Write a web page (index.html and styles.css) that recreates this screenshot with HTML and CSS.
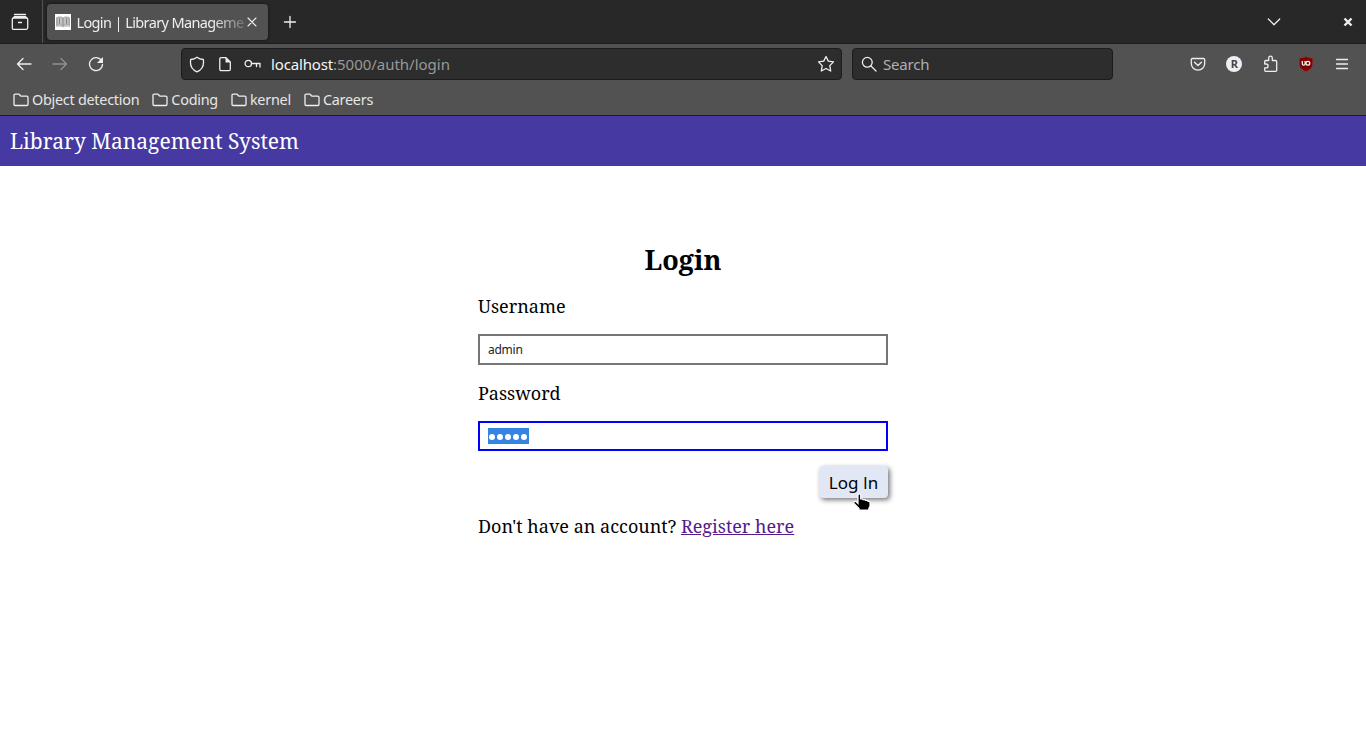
FILE: index.html
```html
<!DOCTYPE html>
<html lang="en">
<head>
<meta charset="utf-8">
<title>Login | Library Management System</title>
<link rel="stylesheet" href="styles.css">
</head>
<body>
<header class="browser">
  <div class="tabstrip">
    <div class="view-button">
      <svg class="icon" width="18" height="18" viewBox="0 0 18 18"><path d="M3.500 1.500h11M2.500 5h13q1.200 0 1.200 1.200v8.600q0 1.500-1.500 1.500H2.800q-1.500 0-1.500-1.500V6.200Q1.300 5 2.500 5zM2 5l1.400-1.400h11.200L16 5M7.500 9.500h3"/></svg>
    </div>
    <div class="tab">
      <svg width="16" height="16" viewBox="0 0 16 16"><path fill="#fff" d="M0 0h16v16H0z"/><path fill="#aaa" d="M1 3.500h1v8h5l1 1 1-1h5v-8h1v9H9l-1 1-1-1H1z"/><path fill="#c2c2c2" stroke="#999" stroke-width=".7" d="M2.500 3h4L8 4l1.500-1h4v8H9.500L8 12l-1.500-1h-4z"/><path stroke="#888" d="M8 4v8M4.500 4v6M11.500 4v6"/></svg>
      <span class="tab-title">Login | Library Manageme</span>
      <svg class="icon tab-close" width="10" height="10" viewBox="0 0 10 10"><path d="M1 1l8 8M9 1L1 9"/></svg>
    </div>
    <svg class="icon new-tab" width="14" height="14" viewBox="0 0 14 14"><path d="M7 1.500v11M1.500 7h11"/></svg>
    <svg class="icon list-tabs" width="14" height="10" viewBox="0 0 14 10"><path d="M1.300 2L7 7.700 12.700 2"/></svg>
    <svg class="icon window-close" width="10" height="10" viewBox="0 0 10 10"><path d="M1.500 1.500l7 7M8.500 1.500l-7 7"/></svg>
  </div>
  <div class="toolbar">
    <div class="nav">
      <svg class="icon" width="16" height="16" viewBox="0 0 16 16"><path d="M15 8H1.500M7 2.500L1.500 8 7 13.500"/></svg>
      <svg class="icon dim" width="16" height="16" viewBox="0 0 16 16"><path d="M1 8h13.500M9 2.500L14.500 8 9 13.500"/></svg>
      <svg class="icon" width="16" height="16" viewBox="0 0 16 16"><path d="M13.700 5A6.500 6.500 0 1 0 14.500 8.500"/><path class="solid" d="M15 1v6H9z"/></svg>
    </div>
    <div class="urlbar">
      <svg class="icon" width="16" height="17" viewBox="0 0 16 17"><path d="M8 1.200c2 1.500 4.200 2.100 6.300 2.300.8 5-.8 10.200-6.300 12.300C2.500 13.700.9 8.500 1.700 3.500 3.800 3.300 6 2.700 8 1.200z"/></svg>
      <svg class="icon page-icon" width="14" height="16" viewBox="0 0 14 16"><path d="M3.300 1.700H8l4.300 4.300v7.200q0 1.500-1.500 1.500H3.300q-1.500 0-1.500-1.500v-10q0-1.500 1.500-1.500z"/><path class="solid" d="M7.500 1.500v5h5z"/></svg>
      <svg class="icon key-icon" width="17" height="12" viewBox="0 0 17 12"><circle cx="4.300" cy="5.500" r="3.200"/><path d="M7.500 5.500H16V9M12.500 5.500v3"/></svg>
      <span class="url"><b>localhost</b>:5000/auth/login</span>
      <svg class="icon star" width="18" height="18" viewBox="0 0 18 18"><path d="M9 1.500l2.300 4.600 5.200.8-3.700 3.700.9 5.400L9 13.500l-4.700 2.500.9-5.400L1.500 6.900l5.200-.8z"/></svg>
    </div>
    <div class="searchbar">
      <svg class="icon" width="16" height="16" viewBox="0 0 16 16"><circle cx="6.300" cy="6.300" r="4.900"/><path d="M10 10l5 5"/></svg>
      <span>Search</span>
    </div>
    <div class="actions">
      <svg class="icon" width="16" height="16" viewBox="0 0 16 16"><path d="M2.500 2.500h11q1.200 0 1.200 1.200V7.500a6.700 6.700 0 0 1-13.400 0V3.700q0-1.200 1.200-1.200zM4.500 6.200L8 9.500l3.500-3.300"/></svg>
      <span class="avatar">R</span>
      <svg class="icon" width="16" height="18" viewBox="0 0 16 18"><path d="M1.700 9V6.500q0-1 1-1h3V3a1.800 1.800 0 0 1 3.600 0v2.500h3.200q1.200 0 1.200 1.200v8.600q0 1-1 1h-10q-1 0-1-1v-2.500h1.500a1.900 1.900 0 0 0 0-3.800z"/></svg>
      <svg width="16" height="16" viewBox="0 0 16 16"><path fill="#800000" stroke="#953c3c" stroke-width=".5" d="M7 .5c2 1.300 4.300 1.500 6.700 1.500v5.500c0 4-2.700 6.500-6.700 8-4-1.500-6.700-4-6.700-8V2C2.700 2 5 1.800 7 .5z"/><path fill="none" stroke="#fff" stroke-width="1.200" d="M3.300 5v3q0 1.200 1.400 1.200T6.100 8V5"/><circle cx="8.900" cy="7.300" r="1.900" fill="none" stroke="#fff" stroke-width="1.200"/></svg>
      <svg class="icon" width="14" height="12" viewBox="0 0 14 12"><path d="M1.500 1.500h11M1.500 6h11M1.500 10.500h11"/></svg>
    </div>
  </div>
  <nav class="bookmarks">
    <span class="bookmark"><svg class="icon" width="16" height="14" viewBox="0 0 16 14"><path d="M2.200 1.200H6l2 2h5.800q1.200 0 1.200 1.200v6.900q0 1.200-1.200 1.200H2.200Q1 12.500 1 11.300V2.400q0-1.200 1.200-1.200z"/></svg><span>Object detection</span></span>
    <span class="bookmark"><svg class="icon" width="16" height="14" viewBox="0 0 16 14"><path d="M2.200 1.200H6l2 2h5.800q1.200 0 1.200 1.200v6.900q0 1.200-1.200 1.200H2.200Q1 12.500 1 11.300V2.400q0-1.200 1.200-1.200z"/></svg><span>Coding</span></span>
    <span class="bookmark"><svg class="icon" width="16" height="14" viewBox="0 0 16 14"><path d="M2.200 1.200H6l2 2h5.800q1.200 0 1.200 1.200v6.900q0 1.200-1.200 1.200H2.200Q1 12.500 1 11.300V2.400q0-1.200 1.200-1.200z"/></svg><span>kernel</span></span>
    <span class="bookmark"><svg class="icon" width="16" height="14" viewBox="0 0 16 14"><path d="M2.200 1.200H6l2 2h5.800q1.200 0 1.200 1.200v6.900q0 1.200-1.200 1.200H2.200Q1 12.500 1 11.300V2.400q0-1.200 1.200-1.200z"/></svg><span>Careers</span></span>
  </nav>
</header>
<div class="site-header"><span>Library Management System</span></div>
<main class="login">
  <h1><span>Login</span></h1>
  <label class="user-label"><span>Username</span></label>
  <div class="field"><span>admin</span></div>
  <label class="pass-label"><span>Password</span></label>
  <div class="field focused"><span class="selection"><i></i><i></i><i></i><i></i><i></i></span></div>
  <div class="submit-row">
    <div class="submit"><span class="submit-text">Log <span class="cap">I</span>n</span>
      <svg class="cursor" width="20" height="21" viewBox="0 0 20 21"><path fill="#000" stroke="#fff" stroke-width="1.200" d="M5 2.500Q5 1 6.300 1t1.400 1.500V6h1.800l.5.700h2l.5.800h2l.5.900h1q1 0 1 1.200v3.500l-1.200 2.500V17H6v-1.500L4 13.500 1 10.500q-.8-1.500.8-2 1-.2 2.200 1l1 1z"/></svg>
    </div>
  </div>
  <p class="signup"><span class="ask">Don't have an account?</span> <a class="register">Register here</a></p>
</main>
</body>
</html>
```
FILE: styles.css
```css
* { box-sizing: border-box; }
body { margin: 0; height: 736px; overflow: hidden; background: #fff; color: #000; font-family: "Noto Serif", "DejaVu Serif Condensed", "DejaVu Serif", serif; }
svg { display: block; flex: none; }
.icon { fill: none; stroke: #efefef; stroke-width: 1.3; stroke-linecap: round; stroke-linejoin: round; }
.icon .solid { fill: #efefef; stroke: none; }
.dim { opacity: .4; }
.browser { height: 116px; background: #525252; border-bottom: 1px solid #1c1c1c; color: #e6e6e6; font: 15px/20px "Noto Sans", sans-serif; white-space: nowrap; }
.tabstrip { display: flex; align-items: center; height: 44px; background: #282828; border-bottom: 1px solid #1c1c1c; }
.view-button { width: 43px; height: 43px; border-right: 1px solid #525252; padding: 13px 11px; }
.tab { display: flex; align-items: center; width: 221px; height: 36px; margin-left: 4px; padding-left: 8px; border-radius: 4px; background: #525252; box-shadow: 0 0 3px #111; }
.tab-title { width: 170px; margin-left: 5.5px; padding-top: 1px; color: #eee; font-size: 14.5px; letter-spacing: -.66px; word-spacing: .3px; -webkit-mask-image: linear-gradient(90deg, #000 135px, transparent 176px); mask-image: linear-gradient(90deg, #000 135px, transparent 176px); }
.tab-close { margin-left: .5px; stroke-width: 1.1; }
.new-tab { margin-left: 14.5px; }
.list-tabs { margin-left: auto; }
.window-close { margin: 0 13px 0 62px; stroke-width: 2.4; stroke-linecap: butt; }
.toolbar { display: flex; align-items: center; height: 40px; }
.nav { display: flex; gap: 20px; width: 181px; padding-left: 16px; }
.urlbar, .searchbar { display: flex; align-items: center; height: 32px; background: #2d2d2d; border: 1px solid #1c1c1c; border-radius: 4px; }
.urlbar { width: 661px; padding: 0 6px 0 7px; }
.page-icon { margin-left: 13px; }
.key-icon { margin-left: 12px; }
.url { margin-left: 10px; color: #999; letter-spacing: -.02px; }
.url b { color: #f5f5f5; font-weight: 400; letter-spacing: -.15px; }
.star { margin-left: auto; }
.searchbar { width: 261px; margin-left: 10px; padding-left: 8px; gap: 6px; color: #b0b0b0; letter-spacing: -.2px; }
.actions { display: flex; align-items: center; flex: 1; justify-content: space-between; padding: 0 17px 0 77px; }
.avatar { width: 16px; height: 16px; border-radius: 50%; background: #efefef; color: #444; font: bold 11px/16px "Noto Sans", sans-serif; text-align: center; }
.bookmarks { display: flex; align-items: center; gap: 12.6px; height: 31px; padding-left: 12.5px; font-size: 14.4px; letter-spacing: -.25px; }
.bookmark { display: flex; align-items: center; gap: 3.4px; }
.site-header { height: 50px; padding: 10px; background: #4639a2; color: #fff; font-size: 21px; line-height: 30px; white-space: nowrap; }
.login { width: 410px; margin: 72px auto 0; }
h1 { margin: 0; font-size: 27px; line-height: 43px; text-align: center; }
label, .signup { display: block; font-size: 18px; line-height: 26px; white-space: nowrap; }
.user-label { margin-top: 12px; }
.field { display: flex; align-items: center; height: 31px; margin-top: 15px; padding-left: 8px; border: 2px solid #767676; color: #222; font: 12px/16px "Noto Sans", sans-serif; letter-spacing: -.25px; }
.pass-label { margin-top: 15px; }
.focused { height: 30px; border-color: #00f; }
.selection { display: flex; align-items: center; gap: 2px; height: 16px; width: 41px; padding: 2px 1px 0; background: #3584e4; }
.selection i { width: 6px; height: 6px; border-radius: 50%; background: #fff; }
.submit-row { display: flex; justify-content: flex-end; margin-top: 15px; }
.submit { position: relative; width: 69px; height: 32px; border-radius: 4px; background: #e1e7f4; box-shadow: 2px 2px 5px #777; font: 17px/33px "Noto Sans", sans-serif; text-align: center; white-space: nowrap; }
.cap { font-family: "Open Sans", sans-serif; }
.cursor { position: absolute; left: 34px; top: 27px; }
.signup { margin: 15px 0 0; }
.register { color: #551a8b; text-decoration: underline; }
```
